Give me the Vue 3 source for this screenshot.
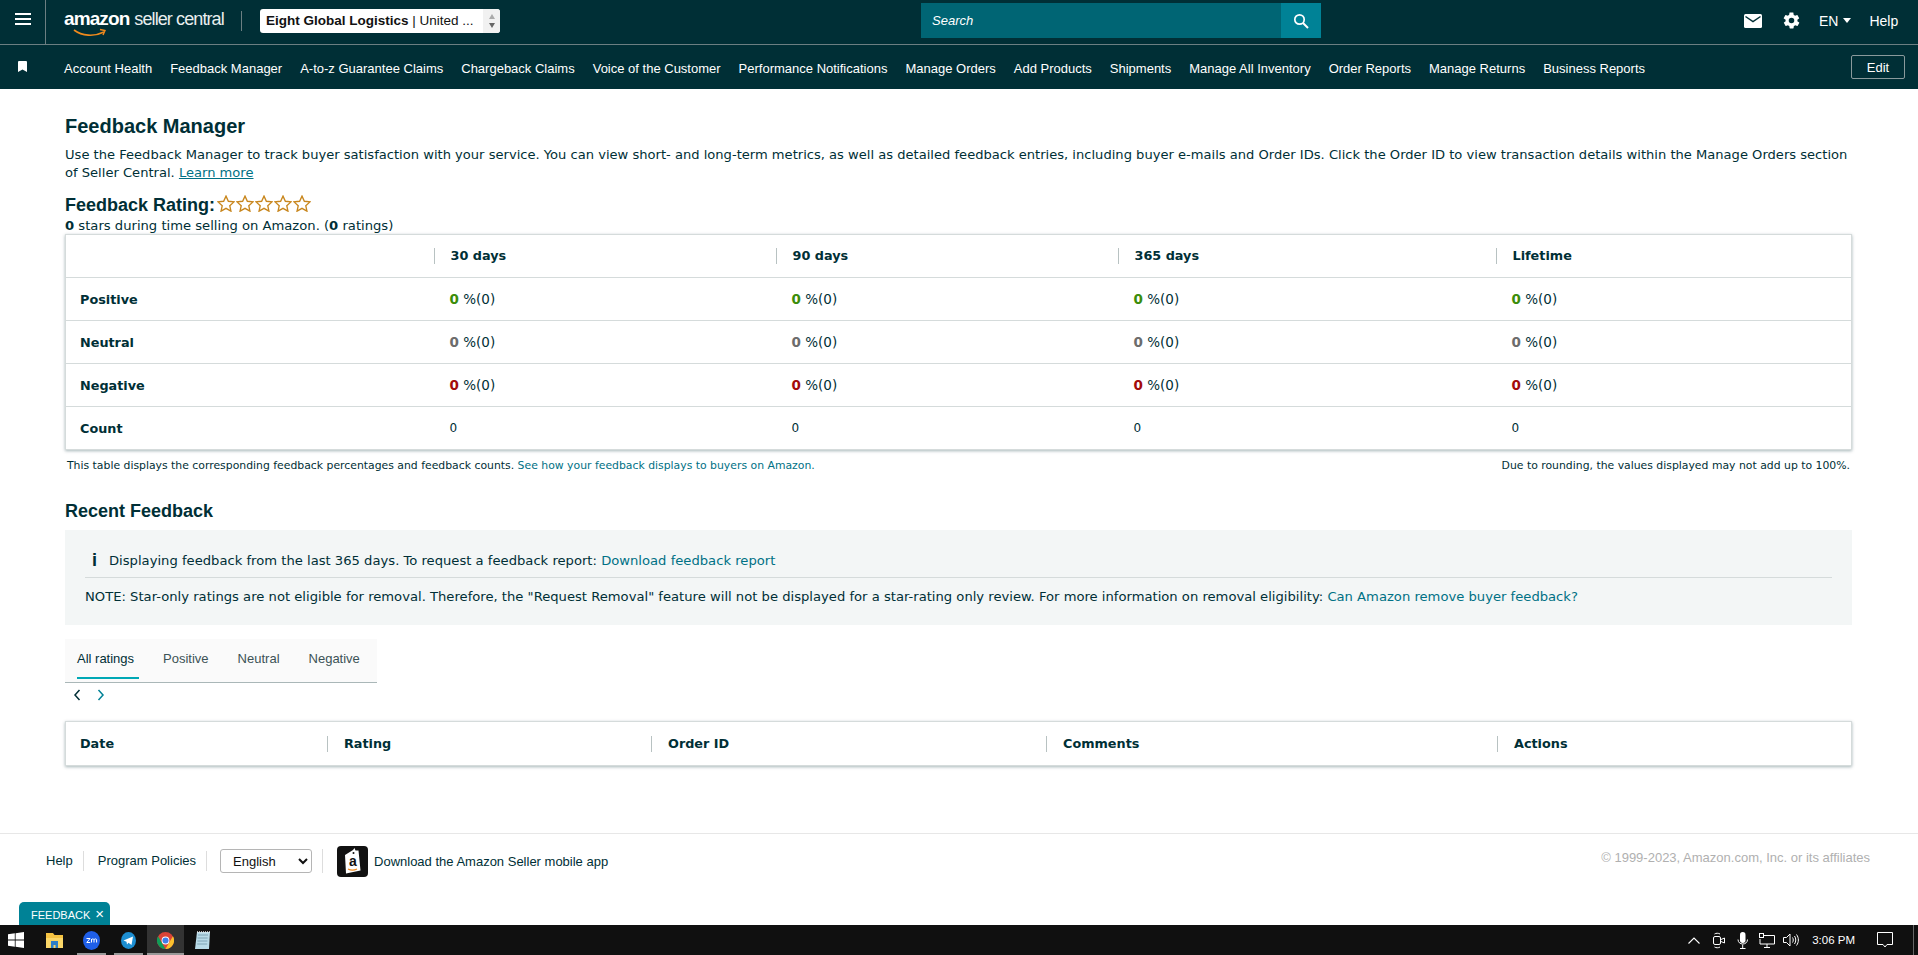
<script setup>
const navItems = [
  'Account Health', 'Feedback Manager', 'A-to-z Guarantee Claims', 'Chargeback Claims',
  'Voice of the Customer', 'Performance Notifications', 'Manage Orders', 'Add Products',
  'Shipments', 'Manage All Inventory', 'Order Reports', 'Manage Returns', 'Business Reports'
]
const periods = ['30 days', '90 days', '365 days', 'Lifetime']
const rows = [
  { label: 'Positive', cls: 'green' },
  { label: 'Neutral', cls: 'grey' },
  { label: 'Negative', cls: 'red' }
]
const tabs = ['All ratings', 'Positive', 'Neutral', 'Negative']
const recentCols = ['Date', 'Rating', 'Order ID', 'Comments', 'Actions']
</script>

<template>
  <div class="page">
    <header class="topbar">
      <button class="burger" aria-label="Menu">
        <svg width="16" height="12" viewBox="0 0 16 12"><path d="M0 1h16M0 6h16M0 11h16" stroke="#fff" stroke-width="2" /></svg>
      </button>
      <div class="logo">
        <span class="logo-amazon">amazon</span>
        <span class="logo-seller">seller central</span>
        <svg class="smile" width="34" height="10" viewBox="0 0 34 10">
          <path d="M1 2c8 6 20 7 30 2" fill="none" stroke="#f08a1d" stroke-width="1.6" />
          <path d="M27 1.500l5 1-2 4.500" fill="none" stroke="#f08a1d" stroke-width="1.400" />
        </svg>
      </div>
      <div class="top-sep"></div>
      <div class="account">
        <span class="account-text"><b>Eight Global Logistics</b> | United ...</span>
        <span class="spin">
          <i class="up"></i>
          <i class="down"></i>
        </span>
      </div>
      <div class="search">
        <span class="search-text">Search</span>
        <span class="search-btn">
          <svg width="16" height="16" viewBox="0 0 16 16"><circle cx="6.500" cy="6.500" r="4.700" fill="none" stroke="#fff" stroke-width="1.700" /><path d="M10 10l5 5" stroke="#fff" stroke-width="1.900" /></svg>
        </span>
      </div>
      <div class="top-right">
        <svg width="18" height="14" viewBox="0 0 18 14"><rect width="18" height="14" rx="1.500" fill="#fff" /><path d="M1.500 2.500L9 7.500l7.500-5" fill="none" stroke="#002f36" stroke-width="1.500" /></svg>
        <svg class="gear" width="19" height="19" viewBox="0 0 24 24"><path fill="#fff" d="M19.400 13c.04-.3.1-.7.1-1s-.06-.7-.1-1l2.100-1.600c.2-.15.25-.4.1-.65l-2-3.450c-.1-.2-.4-.3-.6-.2l-2.500 1c-.5-.4-1.100-.7-1.700-1l-.4-2.650c0-.25-.25-.45-.5-.45h-4c-.25 0-.45.2-.5.45l-.4 2.650c-.6.25-1.200.6-1.700 1l-2.500-1c-.25-.1-.5 0-.6.2l-2 3.450c-.15.25-.1.5.1.65L4.600 11c-.04.3-.1.7-.1 1s.06.7.1 1l-2.100 1.600c-.2.15-.25.4-.1.65l2 3.450c.1.2.4.3.6.2l2.500-1c.5.4 1.100.7 1.700 1l.4 2.650c.05.25.25.45.5.45h4c.25 0 .45-.2.5-.45l.4-2.650c.6-.25 1.200-.6 1.700-1l2.500 1c.25.1.5 0 .6-.2l2-3.450c.15-.25.1-.5-.1-.65zM12 15.500a3.500 3.500 0 1 1 0-7 3.500 3.500 0 0 1 0 7z" /></svg>
        <span class="lang">EN<i class="caret"></i></span>
        <span class="help">Help</span>
      </div>
    </header>

    <nav class="navbar">
      <svg class="bookmark" width="9" height="11" viewBox="0 0 9 11"><path d="M0 1a1 1 0 0 1 1-1h7a1 1 0 0 1 1 1v10L4.500 8.500 0 11z" fill="#fff" /></svg>
      <a v-for="item in navItems" :key="item" class="nav-link">{{ item }}</a>
      <button class="edit">Edit</button>
    </nav>

    <main class="content">
      <h1>Feedback Manager</h1>
      <p class="intro">Use the Feedback Manager to track buyer satisfaction with your service. You can view short- and long-term metrics, as well as detailed feedback entries, including buyer e-mails and Order IDs. Click the Order ID to view transaction details within the Manage Orders section of Seller Central. <a class="link under">Learn more</a></p>

      <div class="rating-head">
        <h2>Feedback Rating:</h2>
        <svg v-for="n in 5" :key="n" width="18" height="17" viewBox="0 0 24 23" class="star"><path d="M12 1.500l3.200 7 7.600.8-5.700 5.100 1.600 7.500L12 18.100l-6.700 3.800 1.600-7.500L1.200 9.300l7.600-.8z" fill="#fff" stroke="#c8861d" stroke-width="1.800" /></svg>
      </div>
      <p class="stars-line"><b>0</b> stars during time selling on Amazon. (<b>0</b> ratings)</p>

      <table class="card metrics">
        <colgroup><col class="c0"><col class="c1"><col class="c1"><col class="c2"><col></colgroup>
        <thead>
          <tr>
            <th></th>
            <th v-for="p in periods" :key="p"><span class="th-in">{{ p }}</span></th>
          </tr>
        </thead>
        <tbody>
          <tr v-for="row in rows" :key="row.label">
            <th>{{ row.label }}</th>
            <td v-for="p in periods" :key="p"><b :class="row.cls">0</b> %(0)</td>
          </tr>
          <tr>
            <th>Count</th>
            <td v-for="p in periods" :key="p" class="count">0</td>
          </tr>
        </tbody>
      </table>
      <div class="table-note">
        <span>This table displays the corresponding feedback percentages and feedback counts. <a class="link">See how your feedback displays to buyers on Amazon.</a></span>
        <span>Due to rounding, the values displayed may not add up to 100%.</span>
      </div>

      <h2 class="recent">Recent Feedback</h2>
      <div class="info">
        <div class="info-top">
          <span class="info-i">i</span>
          <span>Displaying feedback from the last 365 days. To request a feedback report: <a class="link">Download feedback report</a></span>
        </div>
        <div class="info-note">NOTE: Star-only ratings are not eligible for removal. Therefore, the "Request Removal" feature will not be displayed for a star-rating only review. For more information on removal eligibility: <a class="link">Can Amazon remove buyer feedback?</a></div>
      </div>

      <div class="tabs">
        <span v-for="(t, i) in tabs" :key="t" class="tab" :class="{ active: i === 0 }">{{ t }}</span>
      </div>
      <div class="pager">
        <svg width="8" height="12" viewBox="0 0 8 12"><path d="M6.500 1L2 6l4.500 5" fill="none" stroke="#002f36" stroke-width="1.500" /></svg>
        <svg width="8" height="12" viewBox="0 0 8 12"><path d="M1.500 1L6 6l-4.500 5" fill="none" stroke="#008296" stroke-width="1.500" /></svg>
      </div>

      <div class="card recent-head">
        <span v-for="c in recentCols" :key="c" class="rh-cell"><span class="th-in">{{ c }}</span></span>
      </div>
    </main>

    <footer class="footer">
      <div class="foot-left">
        <a class="foot-link first">Help</a>
        <a class="foot-link">Program Policies</a>
        <div class="foot-select">
          <select><option>English</option></select>
        </div>
        <svg class="app-icon" width="31" height="31" viewBox="0 0 31 31">
          <rect width="31" height="31" rx="4" fill="#111" />
          <path d="M8 9l8-5 1.500-2 1 2.500 3 0 2 20-14.500 3z" fill="#fff" />
          <circle cx="16.500" cy="7" r="1" fill="#111" />
          <text x="16" y="20" font-size="14" font-weight="700" text-anchor="middle" font-family="Liberation Sans, sans-serif" fill="#111">a</text>
          <path d="M11 23c3 1.500 6 1.500 9 0" fill="none" stroke="#f08a1d" stroke-width="1.200" />
        </svg>
        <a class="foot-app">Download the Amazon Seller mobile app</a>
      </div>
      <span class="copyright">© 1999-2023, Amazon.com, Inc. or its affiliates</span>
    </footer>

    <div class="feedback-tab">FEEDBACK <span class="x">×</span></div>

    <div class="taskbar">
      <div class="tb-left">
        <svg class="tb-win" width="16" height="16" viewBox="0 0 16 16"><path fill="#fff" d="M0 2.300l6.800-1v6.300H0zM7.600 1.200L16 0v7.600H7.600zM0 8.400h6.800v6.300l-6.800-1zM7.600 8.400H16V16l-8.400-1.200z" /></svg>
        <span class="tb-app">
          <svg width="17" height="16" viewBox="0 0 17 16"><path d="M0 1h7l1.500 2H17v13H0z" fill="#f5c342" /><path d="M0 6h17v10H0z" fill="#fbd768" /><path d="M5 9h7v7H9.500v-3h-2v3H5z" fill="#2f7fc9" /></svg>
        </span>
        <span class="tb-app open">
          <svg width="17" height="19" viewBox="0 0 17 19"><ellipse cx="8.500" cy="9.500" rx="8.500" ry="9.500" fill="#1f5fe8" /><path d="M3.500 7.500h3.500L3.800 11.500h3.400M8.500 11.500V8m0 .8c.8-1.200 2.300-1.200 2.500 0v2.700m0-2.700c.8-1.200 2.400-1.200 2.600 0v2.700" fill="none" stroke="#fff" stroke-width="1" /></svg>
        </span>
        <span class="tb-app open">
          <svg width="15" height="17" viewBox="0 0 15 17"><ellipse cx="7.500" cy="8.500" rx="7.500" ry="8.500" fill="#1d8ed1" /><path d="M2.500 8.500l9.500-4-1.500 8.500-3-2.200-1.500 1.700-.5-2.800z" fill="#fff" /></svg>
        </span>
        <span class="tb-app open chrome">
          <svg width="17" height="17" viewBox="0 0 24 24"><circle cx="12" cy="12" r="12" fill="#db4437" /><path d="M12 24A12 12 0 0 1 1.600 6l6 10.500z" fill="#0f9d58" /><path d="M12 24l5-9 5.500-9A12 12 0 0 1 12 24z" fill="#fbc02d" /><circle cx="12" cy="12" r="5.500" fill="#fff" /><circle cx="12" cy="12" r="4.300" fill="#3f7de8" /></svg>
        </span>
        <span class="tb-app">
          <svg width="15" height="19" viewBox="0 0 15 19"><path d="M2 1h13l-1 17H0z" fill="#b9dbe8" /><path d="M3 4h10M2.600 7h10M2.400 10h10M2.200 13h10" stroke="#6e98a8" stroke-width=".8" /><path d="M2 1h13" stroke="#e8e8e8" stroke-width="1.600" stroke-dasharray="1 1" /></svg>
        </span>
      </div>
      <div class="tb-right">
        <svg width="12" height="7" viewBox="0 0 12 7"><path d="M.5 6.500L6 1l5.500 5.500" fill="none" stroke="#fff" stroke-width="1.100" /></svg>
        <svg class="tb-cam" width="12" height="17" viewBox="0 0 12 17"><rect x=".5" y="4.500" width="7" height="8" rx="1.500" fill="none" stroke="#fff" /><path d="M8 7.500l3.500-1.500v5L8 9.500M1.500 2c1.500-1 4-1 5.500 0M1.500 15c1.500 1 4 1 5.500 0" fill="none" stroke="#fff" /></svg>
        <svg class="tb-mic" width="11" height="17" viewBox="0 0 11 17"><rect x="3" y="0" width="5.500" height="11" rx="2.700" fill="#fff" /><path d="M1 7.500c0 6 9.500 6 9.500 0M5.700 12.500V16M3 16.500h5.500" fill="none" stroke="#fff" /></svg>
        <svg class="tb-net" width="16" height="15" viewBox="0 0 16 15"><path d="M5 2.500h10.500v8.500H1V6M8 11v3M5 14.500h6" fill="none" stroke="#fff" /><rect x=".5" y=".5" width="4" height="4" fill="#111" stroke="#fff" /></svg>
        <svg class="tb-spk" width="16" height="14" viewBox="0 0 16 14"><path d="M.5 4.500h3L7 1v12L3.500 9.500h-3zM9.500 4.500c1 1.500 1 3.500 0 5M11.500 3c1.700 2.500 1.700 5.500 0 8M13.500 1.500c2.500 3.500 2.500 7.500 0 11" fill="none" stroke="#fff" /></svg>
        <span class="tb-time">3:06 PM</span>
        <svg class="tb-notif" width="16" height="16" viewBox="0 0 16 16"><path d="M.5.500h15v12H10l-2 2.500-2-2.500H.5z" fill="none" stroke="#fff" /></svg>
        <span class="tb-edge"></span>
      </div>
    </div>
  </div>
</template>

<style>
html, body {
  margin: 0;
  overflow: hidden;
}
</style>

<style scoped>
.page {
  position: relative;
  width: 1918px;
  height: 955px;
  display: flex;
  flex-direction: column;
  background: #fff;
  color: #002f36;
  font-family: "DejaVu Sans", sans-serif;
  font-size: 13.150px;
  overflow: hidden;
}

.topbar {
  height: 41px;
  padding-bottom: 3px;
  flex: none;
  display: flex;
  align-items: center;
  background: #002f36;
  border-bottom: 1px solid #6c7f82;
  font-family: "Liberation Sans", sans-serif;
  color: #fff;
}
.burger {
  width: 46px;
  height: 44px;
  flex: none;
  align-self: flex-start;
  background: none;
  border: 0;
  border-right: 1px solid #6c7f82;
  padding: 0 0 4px;
}
.logo {
  position: relative;
  margin-left: 18px;
  width: 177px;
  height: 30px;
  line-height: 26px;
  white-space: nowrap;
}
.logo-amazon {
  font-size: 19px;
  font-weight: 700;
  letter-spacing: -0.9px;
}
.logo-seller {
  font-size: 18px;
  letter-spacing: -0.9px;
  margin-left: 5px;
  color: #e9eeee;
}
.smile {
  position: absolute;
  left: 9px;
  top: 22px;
}
.top-sep {
  width: 1px;
  height: 20px;
  background: #6c7f82;
  flex: none;
}
.account {
  margin-left: 18px;
  width: 240px;
  height: 24px;
  background: #fff;
  border-radius: 3px;
  color: #111;
  font-size: 13.500px;
  display: flex;
  align-items: center;
  justify-content: space-between;
  padding-left: 6px;
  box-sizing: border-box;
}
.account-text b {
  font-weight: 700;
  font-size: 13.500px;
}
.spin {
  width: 17px;
  height: 24px;
  background: #f1f1f1;
  border-radius: 0 3px 3px 0;
  display: flex;
  flex-direction: column;
  align-items: center;
  justify-content: center;
  gap: 4px;
}
.up, .down {
  width: 0;
  height: 0;
  border-left: 3.500px solid transparent;
  border-right: 3.500px solid transparent;
}
.up { border-bottom: 5px solid #aaa; }
.down { border-top: 5px solid #666; }
.search {
  margin-left: 421px;
  width: 400px;
  height: 35px;
  background: #006574;
  display: flex;
  align-items: center;
  justify-content: space-between;
}
.search-text {
  font-style: italic;
  font-size: 13px;
  padding-left: 11px;
}
.search-btn {
  width: 40px;
  height: 35px;
  background: #008296;
  display: flex;
  align-items: center;
  justify-content: center;
}
.top-right {
  margin-left: 423px;
  display: flex;
  align-items: center;
  font-size: 14px;
}
.gear {
  margin-left: 20px;
}
.lang {
  margin-left: 18px;
  display: flex;
  align-items: center;
}
.caret {
  margin-left: 5px;
  border-left: 4px solid transparent;
  border-right: 4px solid transparent;
  border-top: 5px solid #fff;
}
.help {
  margin-left: 18px;
}

.navbar {
  height: 42px;
  padding-top: 2px;
  flex: none;
  display: flex;
  align-items: center;
  background: #002f36;
  color: #fff;
  font-family: "Liberation Sans", sans-serif;
  font-size: 13px;
  position: relative;
}
.bookmark {
  margin-left: 18px;
  margin-right: 37px;
  margin-top: -4px;
}
.nav-link {
  margin-right: 18px;
  white-space: nowrap;
}
.edit {
  position: absolute;
  left: 1851px;
  top: 10px;
  width: 54px;
  height: 24px;
  background: none;
  border: 1px solid #8a9a9c;
  border-radius: 2px;
  color: #fff;
  font-family: "Liberation Sans", sans-serif;
  font-size: 13px;
  padding: 0;
}

.content {
  flex: 1;
  padding: 25px 66px 0 65px;
  min-height: 0;
}
h1 {
  margin: 0;
  font-family: "Liberation Sans", sans-serif;
  font-size: 20px;
  font-weight: 700;
  line-height: 24px;
  color: #002f36;
}
.intro {
  margin: 8px 0 0;
  font-size: 13.080px;
  line-height: 18px;
}
.link {
  color: #007185;
}
.under {
  text-decoration: underline;
}
.rating-head {
  display: flex;
  align-items: center;
  margin-top: 13px;
  height: 20px;
}
h2 {
  margin: 0;
  font-family: "Liberation Sans", sans-serif;
  font-size: 18px;
  font-weight: 700;
  color: #002f36;
}
.rating-head h2 {
  margin-right: 1px;
}
.star {
  margin-left: 1px;
  margin-top: -3px;
}
.stars-line {
  margin: 3px 0 1px;
  line-height: 15px;
}
.card {
  background: #fff;
  border: 1px solid #d5dbdb;
  box-shadow: 0 1px 3px rgba(0, 47, 54, 0.35);
  box-sizing: border-box;
}
.metrics {
  width: 100%;
  border-collapse: collapse;
  table-layout: fixed;
  font-size: 13.500px;
}
.c0 { width: 368px; }
.c1 { width: 342px; }
.c2 { width: 378px; }
.metrics tr {
  height: 43px;
  border-bottom: 1px solid #d5dbdb;
}
.metrics tbody tr:last-child {
  border-bottom: 0;
}
.metrics th, .metrics td {
  text-align: left;
  padding: 0 0 0 14px;
}
.metrics th {
  font-size: 12.800px;
}
.metrics td {
  padding-left: 16px;
}
.metrics td.count {
  font-size: 12px;
}
.metrics thead th {
  padding-left: 0;
}
.th-in {
  display: inline-block;
  border-left: 1px solid #b8c2c2;
  padding-left: 16px;
  height: 16px;
  line-height: 16px;
  font-size: 12.800px;
  font-weight: 700;
}
.green { color: #3b8d0a; }
.grey { color: #6c6c6c; }
.red { color: #a30b0b; }
.table-note {
  display: flex;
  justify-content: space-between;
  padding: 9px 2px 0;
  font-size: 10.850px;
  line-height: 14px;
}
.recent {
  margin-top: 27px;
  line-height: 22px;
}
.info {
  margin-top: 8px;
  height: 95px;
  background: #f3f6f6;
  padding: 0 20px;
  box-sizing: border-box;
}
.info-top {
  display: flex;
  align-items: center;
  height: 48px;
  border-bottom: 1px solid #d5dbdb;
  padding: 14px 0 0 7px;
  box-sizing: border-box;
}
.info-i {
  font-weight: 700;
  font-size: 18px;
  width: 17px;
  font-family: "Liberation Sans", sans-serif;
}
.info-note {
  margin-top: 11px;
  line-height: 16px;
}
.tabs {
  margin-top: 14px;
  width: 312px;
  height: 44px;
  background: #fafafa;
  border-bottom: 1px solid #aab7b8;
  box-sizing: border-box;
  display: flex;
  padding-left: 12px;
  font-family: "Liberation Sans", sans-serif;
  font-size: 13px;
  gap: 24px;
}
.tab {
  height: 40px;
  line-height: 40px;
  padding-right: 5px;
  color: #3c5256;
  box-sizing: border-box;
}
.active {
  color: #002f36;
  border-bottom: 2px solid #00a8b5;
}
.pager {
  display: flex;
  gap: 16px;
  margin: 5px 0 0 8px;
  height: 14px;
  align-items: center;
}
.recent-head {
  margin-top: 19px;
  height: 45px;
  display: grid;
  grid-template-columns: 261px 324px 395px 451px 1fr;
  align-items: center;
  font-weight: 700;
}
.rh-cell:first-child .th-in {
  border-left: 0;
  padding-left: 14px;
}
.footer {
  flex: none;
  height: 92px;
  box-sizing: border-box;
  border-top: 1px solid #e7e7e7;
  display: flex;
  justify-content: space-between;
  font-family: "Liberation Sans", sans-serif;
  font-size: 13px;
  padding: 11px 48px 0 46px;
}
.foot-left {
  display: flex;
  align-items: center;
  height: 32px;
}
.foot-link {
  padding-right: 10px;
  margin-right: 14px;
  border-right: 1px solid #ddd;
  line-height: 20px;
}
.foot-select {
  padding-right: 10px;
  margin-right: 14px;
  margin-left: -1px;
  border-right: 1px solid #ddd;
}
select {
  width: 92px;
  height: 24px;
  display: block;
  background: #fff;
  border: 1px solid #b5b5b5;
  border-radius: 3px;
  padding-left: 8px;
  font-family: "Liberation Sans", sans-serif;
  font-size: 13px;
  color: #111;
}
.app-icon {
  margin-right: 6px;
}
.copyright {
  color: #b0b0b0;
  font-size: 13px;
  line-height: 16px;
  margin-top: 5px;
}
.feedback-tab {
  position: absolute;
  left: 19px;
  top: 902px;
  width: 91px;
  height: 23px;
  box-sizing: border-box;
  background: #008296;
  border-radius: 5px 5px 0 0;
  color: #fff;
  font-family: "Liberation Sans", sans-serif;
  font-size: 11px;
  line-height: 24px;
  padding-left: 12px;
  white-space: nowrap;
}
.x {
  font-size: 15px;
  margin-left: 2px;
}
.taskbar {
  flex: none;
  height: 30px;
  background: #101010;
  display: flex;
  justify-content: space-between;
  font-family: "Liberation Sans", sans-serif;
}
.tb-left {
  display: flex;
  align-items: center;
}
.tb-win {
  margin: 0 12px 0 8px;
}
.tb-app {
  position: relative;
  width: 37px;
  height: 30px;
  display: flex;
  align-items: center;
  justify-content: center;
}
.open::after {
  content: "";
  position: absolute;
  left: 4px;
  right: 4px;
  bottom: 0;
  height: 2px;
  background: #999;
}
.chrome {
  background: #333;
}
.chrome::after {
  left: 0;
  right: 0;
}
.tb-right {
  display: flex;
  align-items: center;
  color: #fff;
  font-size: 11.500px;
  padding-right: 4px;
}
.tb-cam { margin-left: 13px; }
.tb-mic { margin-left: 12px; }
.tb-net { margin-left: 11px; }
.tb-spk { margin-left: 8px; }
.tb-time {
  margin: 0 22px 0 13px;
  white-space: nowrap;
}
.tb-notif {
  margin-right: 20px;
}
.tb-edge {
  width: 1px;
  height: 30px;
  background: #666;
}
</style>
